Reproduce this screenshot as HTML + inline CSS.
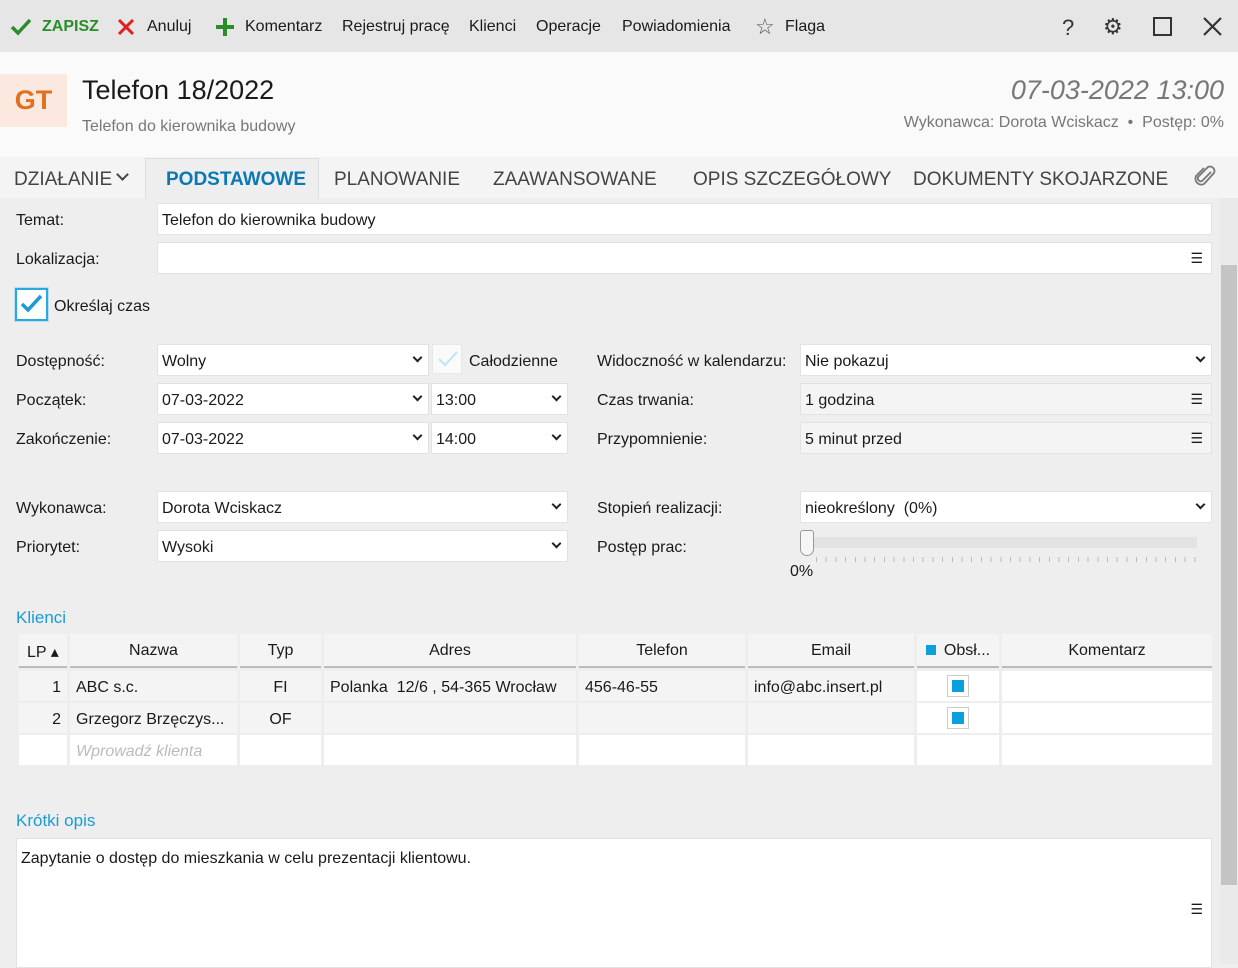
<!DOCTYPE html>
<html><head><meta charset="utf-8"><style>
*{box-sizing:border-box;margin:0;padding:0}
body{width:1238px;height:963px;overflow:hidden;background:#eeeeee;font-family:"Liberation Sans",sans-serif;font-size:16px;color:#1a1a1a;position:relative}
.a{position:absolute;white-space:nowrap}
.f{position:absolute;background:#fff;border:1px solid #e2e2e2;height:32px;padding:8px 4px 4px;font-size:16px}
.cv2{position:absolute;right:7px;top:9px;width:7px;height:7px;border-right:2px solid #222;border-bottom:2px solid #222;transform:rotate(45deg)}
.hm{position:absolute;right:8px;top:7px;font-size:14px}
.g{background:#f4f4f4}
.th{position:absolute;top:634px;height:34px;background:#f4f4f4;text-align:center;padding-top:8px;border-bottom:2px solid #bbb}
.td{position:absolute;height:30px;background:#fff;padding:8px 6px 0}
.tdg{background:#f4f4f4}
.l{position:absolute;white-space:nowrap}
</style></head><body>
<div class="a" style="left:0;top:0;width:1238px;height:52px;background:#e6e6e6"></div>
<svg class="a" style="left:10px;top:18px" width="22" height="18"><path d="M2 9l6 6L20 2" stroke="#2a8c2a" stroke-width="3.5" fill="none"/></svg>
<div class="a" style="left:42px;top:18px;color:#2a8c2a;font-weight:bold">ZAPISZ</div>
<svg class="a" style="left:117px;top:18px" width="18" height="18"><path d="M2 2l14 14M16 2L2 16" stroke="#e02020" stroke-width="3"/></svg>
<div class="a" style="left:147px;top:18px">Anuluj</div>
<svg class="a" style="left:215px;top:17px" width="20" height="20"><path d="M10 1v18M1 10h18" stroke="#2a8c2a" stroke-width="4"/></svg>
<div class="a" style="left:245px;top:18px">Komentarz</div>
<div class="a" style="left:342px;top:18px">Rejestruj pracę</div>
<div class="a" style="left:469px;top:18px">Klienci</div>
<div class="a" style="left:536px;top:18px">Operacje</div>
<div class="a" style="left:622px;top:18px">Powiadomienia</div>
<div class="a" style="left:755px;top:14px;font-size:22px;color:#555">☆</div>
<div class="a" style="left:785px;top:18px">Flaga</div>
<div class="a" style="left:1062px;top:15px;font-size:22px;color:#333">?</div>
<div class="a" style="left:1103px;top:14px;font-size:22px;color:#333">⚙</div>
<div class="a" style="left:1153px;top:17px;width:19px;height:19px;border:2px solid #333"></div>
<svg class="a" style="left:1203px;top:17px" width="19" height="19"><path d="M1 1l17 17M18 1L1 18" stroke="#333" stroke-width="2.2"/></svg>

<div class="a" style="left:0;top:52px;width:1238px;height:105px;background:#fafafa"></div>
<div class="a" style="left:0;top:74px;width:67px;height:53px;background:#fbe9e0;color:#e0701e;font-size:27px;font-weight:bold;text-align:center;padding-top:11px">GT</div>
<div class="a" style="left:82px;top:75px;font-size:27px">Telefon 18/2022</div>
<div class="a" style="left:82px;top:118px;color:#777">Telefon do kierownika budowy</div>
<div class="a" style="right:14px;top:75px;font-size:27px;color:#777;font-style:italic">07-03-2022 13:00</div>
<div class="a" style="right:14px;top:114px;color:#777">Wykonawca: Dorota Wciskacz &nbsp;•&nbsp; Postęp: 0%</div>

<div class="a" style="left:0;top:157px;width:1238px;height:41px;background:#f4f4f4"></div>
<div class="a" style="left:145px;top:158px;width:174px;height:40px;background:#eee;border:1px solid #ddd;border-bottom:none"></div>
<div class="a" style="left:14px;top:169px;font-size:19px;color:#444">DZIAŁANIE</div>
<div class="a" style="left:118px;top:170px;width:9px;height:9px;border-right:2px solid #444;border-bottom:2px solid #444;transform:rotate(45deg)"></div>
<div class="a" style="left:166px;top:169px;font-size:19px;color:#0a78b4;font-weight:bold">PODSTAWOWE</div>
<div class="a" style="left:334px;top:169px;font-size:19px;color:#444">PLANOWANIE</div>
<div class="a" style="left:493px;top:169px;font-size:19px;color:#444">ZAAWANSOWANE</div>
<div class="a" style="left:693px;top:169px;font-size:19px;color:#444">OPIS SZCZEGÓŁOWY</div>
<div class="a" style="left:913px;top:169px;font-size:19px;color:#444">DOKUMENTY SKOJARZONE</div>
<svg class="a" style="left:1193px;top:164px" width="24" height="26"><path d="M18 8L9 17a3 3 0 0 1-4-4l10-10a4.5 4.5 0 0 1 6 6L11 20a6 6 0 0 1-8-8l8-8" stroke="#777" stroke-width="1.8" fill="none"/></svg>

<div class="a" style="left:1220px;top:198px;width:18px;height:765px;background:#eaeaea"></div>
<div class="a" style="left:1221px;top:265px;width:16px;height:620px;background:#c4c4c4"></div>

<div class="l" style="left:16px;top:212px">Temat:</div>
<div class="f" style="left:157px;top:203px;width:1055px">Telefon do kierownika budowy</div>
<div class="l" style="left:16px;top:251px">Lokalizacja:</div>
<div class="f" style="left:157px;top:242px;width:1055px"><span class="hm">☰</span></div>
<div class="a" style="left:15px;top:288px;width:33px;height:33px;background:#fff;border:2px solid #27a9e1;box-shadow:0 0 0 1px #bde"></div>
<svg class="a" style="left:20px;top:294px" width="24" height="20"><path d="M2 10l6 6L21 2" stroke="#1b9bd7" stroke-width="3.5" fill="none"/></svg>
<div class="l" style="left:54px;top:298px">Określaj czas</div>

<div class="l" style="left:16px;top:353px">Dostępność:</div>
<div class="f" style="left:157px;top:344px;width:272px">Wolny<span class="cv2"></span></div>
<div class="a" style="left:432px;top:344px;width:30px;height:30px;background:#fafafa;border:1px solid #e8e8e8"></div>
<svg class="a" style="left:437px;top:350px" width="22" height="18"><path d="M2 9l6 6L20 2" stroke="#bfe4f4" stroke-width="2" fill="none"/></svg>
<div class="l" style="left:469px;top:353px">Całodzienne</div>
<div class="l" style="left:16px;top:392px">Początek:</div>
<div class="f" style="left:157px;top:383px;width:272px">07-03-2022<span class="cv2"></span></div>
<div class="f" style="left:431px;top:383px;width:137px">13:00<span class="cv2"></span></div>
<div class="l" style="left:16px;top:431px">Zakończenie:</div>
<div class="f" style="left:157px;top:422px;width:272px">07-03-2022<span class="cv2"></span></div>
<div class="f" style="left:431px;top:422px;width:137px">14:00<span class="cv2"></span></div>

<div class="l" style="left:597px;top:353px">Widoczność w kalendarzu:</div>
<div class="f" style="left:800px;top:344px;width:412px">Nie pokazuj<span class="cv2"></span></div>
<div class="l" style="left:597px;top:392px">Czas trwania:</div>
<div class="f g" style="left:800px;top:383px;width:412px">1 godzina<span class="hm">☰</span></div>
<div class="l" style="left:597px;top:431px">Przypomnienie:</div>
<div class="f g" style="left:800px;top:422px;width:412px">5 minut przed<span class="hm">☰</span></div>

<div class="l" style="left:16px;top:500px">Wykonawca:</div>
<div class="f" style="left:157px;top:491px;width:411px">Dorota Wciskacz<span class="cv2"></span></div>
<div class="l" style="left:16px;top:539px">Priorytet:</div>
<div class="f" style="left:157px;top:530px;width:411px">Wysoki<span class="cv2"></span></div>
<div class="l" style="left:597px;top:500px">Stopień realizacji:</div>
<div class="f" style="left:800px;top:491px;width:412px">nieokreślony &nbsp;(0%)<span class="cv2"></span></div>
<div class="l" style="left:597px;top:539px">Postęp prac:</div>
<div class="a" style="left:810px;top:537px;width:387px;height:11px;background:#e3e3e3"></div>
<div class="a" style="left:800px;top:530px;width:14px;height:26px;background:#f6f6f6;border:1px solid #999;border-radius:3px 3px 7px 7px"></div>
<div class="a" style="left:816px;top:557px;width:382px;height:5px;background:repeating-linear-gradient(90deg,#bbb 0 1px,transparent 1px 9.7px)"></div>
<div class="l" style="left:790px;top:563px">0%</div>

<div class="a" style="left:16px;top:608px;color:#1b9bd7;font-size:17px">Klienci</div>
<div class="th" style="left:19px;width:48px;text-align:left;padding-left:8px">LP ▴</div>
<div class="th" style="left:70px;width:167px">Nazwa</div>
<div class="th" style="left:240px;width:81px">Typ</div>
<div class="th" style="left:324px;width:252px">Adres</div>
<div class="th" style="left:579px;width:166px">Telefon</div>
<div class="th" style="left:748px;width:166px">Email</div>
<div class="th" style="left:917px;width:82px"><span style="display:inline-block;width:10px;height:10px;background:#0aa0dc;margin-right:8px"></span>Obsł...</div>
<div class="th" style="left:1002px;width:210px">Komentarz</div>

<div class="td tdg" style="left:19px;top:671px;width:48px;text-align:right">1</div>
<div class="td tdg" style="left:70px;top:671px;width:167px">ABC s.c.</div>
<div class="td tdg" style="left:240px;top:671px;width:81px;text-align:center">FI</div>
<div class="td tdg" style="left:324px;top:671px;width:252px">Polanka &nbsp;12/6 , 54-365 Wrocław</div>
<div class="td tdg" style="left:579px;top:671px;width:166px">456-46-55</div>
<div class="td tdg" style="left:748px;top:671px;width:166px">info@abc.insert.pl</div>
<div class="td" style="left:917px;top:671px;width:82px"></div>
<div class="td" style="left:1002px;top:671px;width:210px"></div>
<div class="td tdg" style="left:19px;top:703px;width:48px;text-align:right">2</div>
<div class="td tdg" style="left:70px;top:703px;width:167px">Grzegorz Brzęczys...</div>
<div class="td tdg" style="left:240px;top:703px;width:81px;text-align:center">OF</div>
<div class="td tdg" style="left:324px;top:703px;width:252px"></div>
<div class="td tdg" style="left:579px;top:703px;width:166px"></div>
<div class="td tdg" style="left:748px;top:703px;width:166px"></div>
<div class="td" style="left:917px;top:703px;width:82px"></div>
<div class="td" style="left:1002px;top:703px;width:210px"></div>
<div class="a" style="left:947px;top:675px;width:22px;height:22px;border:1px solid #ccc;background:#fff"><div style="margin:4px;width:12px;height:12px;background:#0aa0dc"></div></div>
<div class="a" style="left:947px;top:707px;width:22px;height:22px;border:1px solid #ccc;background:#fff"><div style="margin:4px;width:12px;height:12px;background:#0aa0dc"></div></div>
<div class="td" style="left:19px;top:735px;width:48px"></div>
<div class="td" style="left:70px;top:735px;width:167px;color:#bbb;font-style:italic">Wprowadź klienta</div>
<div class="td" style="left:240px;top:735px;width:81px"></div>
<div class="td" style="left:324px;top:735px;width:252px"></div>
<div class="td" style="left:579px;top:735px;width:166px"></div>
<div class="td" style="left:748px;top:735px;width:166px"></div>
<div class="td" style="left:917px;top:735px;width:82px"></div>
<div class="td" style="left:1002px;top:735px;width:210px"></div>

<div class="a" style="left:16px;top:811px;color:#1b9bd7;font-size:17px">Krótki opis</div>
<div class="a" style="left:16px;top:838px;width:1196px;height:130px;background:#fff;border:1px solid #e2e2e2;padding:11px 4px">Zapytanie o dostęp do mieszkania w celu prezentacji klientowu.<span style="position:absolute;right:8px;top:62px;font-size:14px">☰</span></div>
</body></html>
